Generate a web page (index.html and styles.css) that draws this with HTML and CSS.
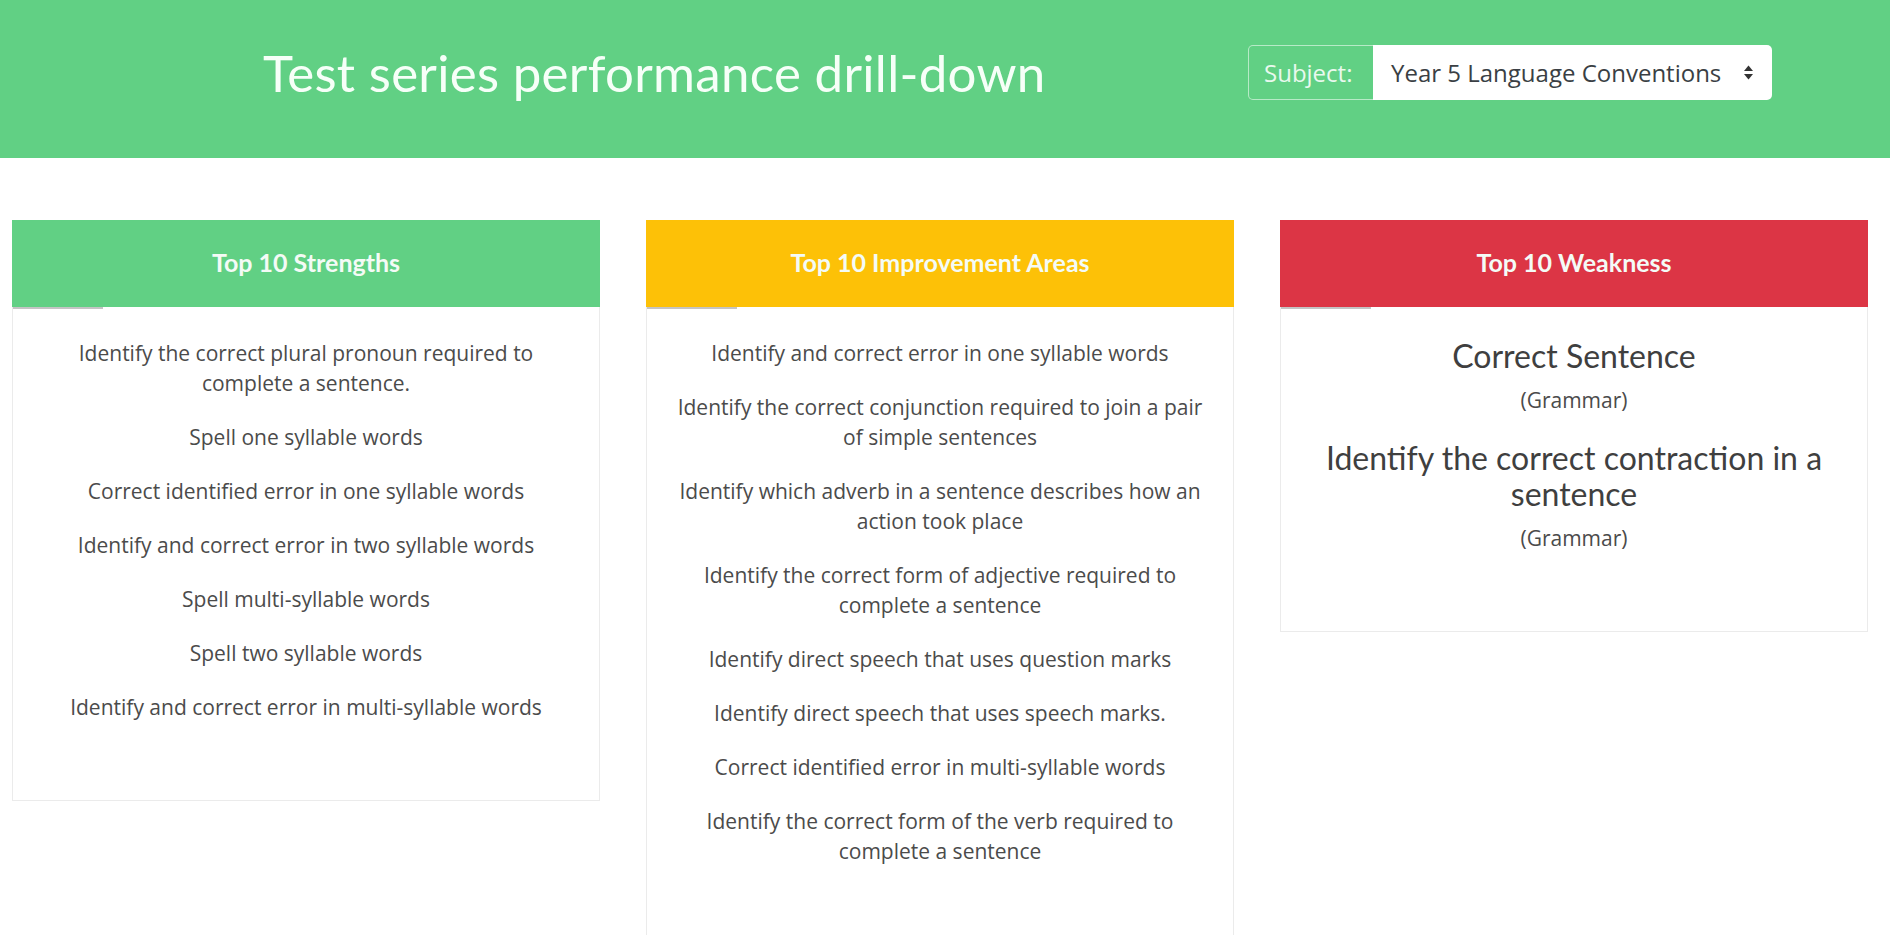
FILE: index.html
```html
<!DOCTYPE html>
<html lang="en">
<head>
<meta charset="utf-8">
<title>Test series performance drill-down</title>
<link rel="stylesheet" href="styles.css">
</head>
<body>
<header class="topbar">
  <h1 class="page-title">Test series performance drill-down</h1>
  <div class="subject-group">
    <span class="subject-label">Subject:</span>
    <div class="subject-select">
      <span class="subject-value">Year 5 Language Conventions</span>
      <svg class="select-arrows" width="11" height="17" viewBox="0 0 11 17" aria-hidden="true">
        <path d="M5.5 1.5 L10 7 H1 Z" fill="#333"/>
        <path d="M5.5 15.5 L10 10 H1 Z" fill="#333"/>
      </svg>
    </div>
  </div>
</header>

<main class="cards">
  <section class="card">
    <div class="card-head head-green"><h2>Top 10 Strengths</h2></div>
    <div class="card-body">
      <p class="item">Identify the correct plural pronoun required to complete a sentence.</p>
      <p class="item">Spell one syllable words</p>
      <p class="item">Correct identified error in one syllable words</p>
      <p class="item">Identify and correct error in two syllable words</p>
      <p class="item">Spell multi-syllable words</p>
      <p class="item">Spell two syllable words</p>
      <p class="item">Identify and correct error in multi-syllable words</p>
    </div>
  </section>

  <section class="card">
    <div class="card-head head-yellow"><h2>Top 10 Improvement Areas</h2></div>
    <div class="card-body">
      <p class="item">Identify and correct error in one syllable words</p>
      <p class="item">Identify the correct conjunction required to join a pair of simple sentences</p>
      <p class="item">Identify which adverb in a sentence describes how an action took place</p>
      <p class="item">Identify the correct form of adjective required to complete a sentence</p>
      <p class="item">Identify direct speech that uses question marks</p>
      <p class="item">Identify direct speech that uses speech marks.</p>
      <p class="item">Correct identified error in multi-syllable words</p>
      <p class="item">Identify the correct form of the verb required to complete a sentence</p>
    </div>
  </section>

  <section class="card">
    <div class="card-head head-red"><h2>Top 10 Weakness</h2></div>
    <div class="card-body">
      <h3 class="weak-title">Correct Sentence</h3>
      <p class="weak-cat">(Grammar)</p>
      <h3 class="weak-title">Identify the correct contraction in a sentence</h3>
      <p class="weak-cat">(Grammar)</p>
    </div>
  </section>
</main>
</body>
</html>
```

FILE: styles.css
```css
* { box-sizing: border-box; }

html, body {
  margin: 0;
  padding: 0;
  background: #ffffff;
  font-family: "Open Sans", "Liberation Sans", sans-serif;
}

.topbar {
  height: 158px;
  background: #61d084;
  display: flex;
  align-items: flex-start;
  justify-content: space-between;
  padding: 45px 118px 0 263px;
}

.page-title {
  margin: 0;
  font-family: Lato, "Open Sans", sans-serif;
  font-weight: 400;
  font-size: 51px;
  line-height: 55px;
  color: #f6fff8;
  letter-spacing: 0.3px;
}

.subject-group {
  display: flex;
  height: 55px;
  width: 524px;
}

.subject-label {
  display: flex;
  align-items: center;
  padding: 0 15px;
  width: 125px;
  font-size: 24px;
  color: #e9f9ee;
  border: 1px solid rgba(255, 255, 255, 0.55);
  border-right: none;
  border-radius: 5px 0 0 5px;
}

.subject-select {
  flex: 1;
  display: flex;
  align-items: center;
  justify-content: space-between;
  padding: 0 18px 0 18px;
  background: #ffffff;
  border-radius: 0 5px 5px 0;
  font-size: 24px;
  color: #3a3f44;
}

.select-arrows { display: block; }

.cards {
  display: flex;
  align-items: flex-start;
  gap: 46px;
  padding: 62px 0 0 12px;
}

.card {
  width: 588px;
  flex: none;
}

.card-head {
  position: relative;
  height: 87px;
  display: flex;
  align-items: center;
  justify-content: center;
  padding-bottom: 4px;
}

.card-head::after {
  content: "";
  position: absolute;
  left: 1px;
  bottom: -2px;
  width: 90px;
  height: 2px;
  background: rgba(60, 60, 60, 0.3);
}

.card-head h2 {
  margin: 0;
  font-family: Lato, "Open Sans", sans-serif;
  font-weight: 700;
  font-size: 25px;
  color: #f4fbf6;
}

.head-green { background: #61d084; }
.head-yellow { background: #fdc107; }
.head-red { background: #dc3545; }

.card-body {
  border: 1px solid #ebebeb;
  border-top: none;
  padding: 31px 29px 54px;
  text-align: center;
  color: #4b4b4b;
}

.item {
  margin: 0 0 24px;
  font-size: 21px;
  line-height: 30px;
}

.weak-title {
  margin: 0 0 11px;
  font-family: Lato, "Open Sans", sans-serif;
  font-weight: 400;
  font-size: 32px;
  line-height: 36px;
  color: #3f3f3f;
}

.weak-cat {
  margin: 0 0 25px;
  font-size: 21px;
  line-height: 30px;
}

.weak-cat:last-child { margin-bottom: 0; padding-bottom: 24px; }
```
